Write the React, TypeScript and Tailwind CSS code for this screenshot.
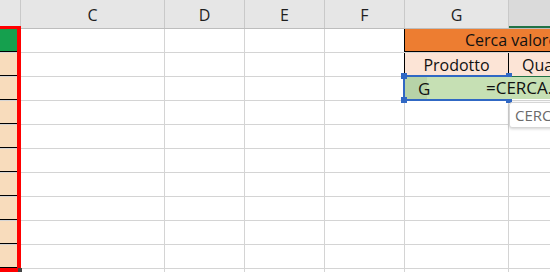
import React from "react";

const font = { fontFamily: '"Open Sans", "Liberation Sans", sans-serif' };

const widths = ["w-[21px]", "w-[144px]", "w-[80px]", "w-[80px]", "w-[80px]", "w-[104px]"];

function HeaderRow() {
  const labels = ["", "C", "D", "E", "F", "G"];
  return (
    <div className="flex h-[29px] border-b border-[#bdbdbd] bg-[#e6e6e6]">
      {labels.map((l, i) => (
        <div
          key={i}
          className={`${widths[i]} shrink-0 h-full border-r border-[#c9c9c9] flex items-center justify-center pt-[1px] text-[16px] text-[#1f1f1f]`}
        >
          {l}
        </div>
      ))}
      <div className="flex-1 h-full bg-[#dadada] border-b-2 border-[#217346]" />
    </div>
  );
}

function BCell({ first }: { first?: boolean }) {
  return (
    <div
      className={`w-[21px] shrink-0 h-full border-r border-[#d4d4d4] ${
        first ? "bg-[#15a04e]" : "bg-[#f8dcbc]"
      } border-b border-b-black`}
    />
  );
}

function Plain({ w, black }: { w: string; black?: boolean }) {
  return (
    <div
      className={`${w} shrink-0 h-full border-r ${black ? "border-r-black" : "border-[#d4d4d4]"}`}
    />
  );
}

function EmptyRow() {
  return (
    <div className="flex h-[24px] border-b border-[#d4d4d4]">
      <BCell />
      <Plain w="w-[144px]" />
      <Plain w="w-[80px]" />
      <Plain w="w-[80px]" />
      <Plain w="w-[80px]" />
      <Plain w="w-[104px]" />
      <div className="flex-1" />
    </div>
  );
}

export default function App() {
  return (
    <div className="relative w-[550px] h-[272px] overflow-hidden bg-white" style={font}>
      <HeaderRow />
      {/* Row 1 */}
      <div className="flex h-[24px] border-b border-[#d4d4d4]">
        <BCell first />
        <Plain w="w-[144px]" />
        <Plain w="w-[80px]" />
        <Plain w="w-[80px]" />
        <Plain w="w-[80px]" black />
        <div className="flex-1 h-full bg-[#ed7d31] border-b border-b-black -mb-px pl-[60px] flex items-center text-[16px] text-[#111] whitespace-nowrap">
          Cerca valore
        </div>
      </div>
      {/* Row 2 */}
      <div className="flex h-[24px] border-b border-[#d4d4d4]">
        <BCell />
        <Plain w="w-[144px]" />
        <Plain w="w-[80px]" />
        <Plain w="w-[80px]" />
        <Plain w="w-[80px]" black />
        <div className="w-[104px] shrink-0 h-full bg-[#fce4d6] border-r border-r-black flex items-center justify-center text-[16px] text-[#111]">
          Prodotto
        </div>
        <div className="flex-1 h-full bg-[#fce4d6] pl-[13px] flex items-center text-[16px] text-[#111] whitespace-nowrap">
          Quantità
        </div>
      </div>
      {/* Row 3 */}
      <div className="flex h-[24px] border-b border-[#d4d4d4]">
        <BCell />
        <Plain w="w-[144px]" />
        <Plain w="w-[80px]" />
        <Plain w="w-[80px]" />
        <Plain w="w-[80px]" />
        <div className="relative w-[104px] shrink-0 h-full bg-[#c6e0b4] flex">
          <div className="w-[22px] h-full bg-[#b7d3a8]" />
          <span className="absolute left-[13px] top-0 h-full flex items-center text-[17px] text-[#111]">G</span>
        </div>
        <div className="flex-1 h-full bg-[#c6e0b4] border-t-2 border-b border-[#217346] -mt-px" />
      </div>
      {Array.from({ length: 8 }).map((_, i) => (
        <EmptyRow key={i} />
      ))}

      {/* red selection border around column B */}
      <div className="absolute left-[-10px] top-[26px] w-[31px] h-[246px] border-[4px] border-[#ff0000] border-t-[3px]" />
      <div className="absolute left-[18px] top-[268px] w-[4px] h-[4px] bg-[#444]" />

      {/* blue selection on G3 */}
      <div className="absolute left-[403px] top-[75px] w-[107px] h-[26px] border-2 border-[#3068c4] z-20" />
      <div className="absolute left-[401px] top-[73px] w-[6px] h-[6px] bg-[#3068c4] z-20" />
      <div className="absolute left-[506px] top-[73px] w-[6px] h-[6px] bg-[#3068c4] z-20" />
      <div className="absolute left-[401px] top-[97px] w-[6px] h-[6px] bg-[#3068c4] z-20" />
      <div className="absolute left-[506px] top-[97px] w-[6px] h-[6px] bg-[#3068c4] z-20" />

      {/* overflowing formula text in G3 */}
      <div className="absolute left-[486px] top-[77px] h-[22px] flex items-center bg-[#c6e0b4] text-[17px] text-[#111] whitespace-nowrap z-30">
        =CERCA.VERT(
      </div>

      {/* tooltip */}
      <div className="absolute left-[509px] top-[102px] w-[260px] h-[26px] bg-white border border-[#d6d6d6] rounded-[3px] shadow-[0_1px_3px_rgba(0,0,0,0.18)] pl-[5px] flex items-center text-[15px] text-[#6b6b6b] whitespace-nowrap z-30">
        CERCA.VERT(valore; matrice_tabella; indice; [intervallo])
      </div>
    </div>
  );
}
